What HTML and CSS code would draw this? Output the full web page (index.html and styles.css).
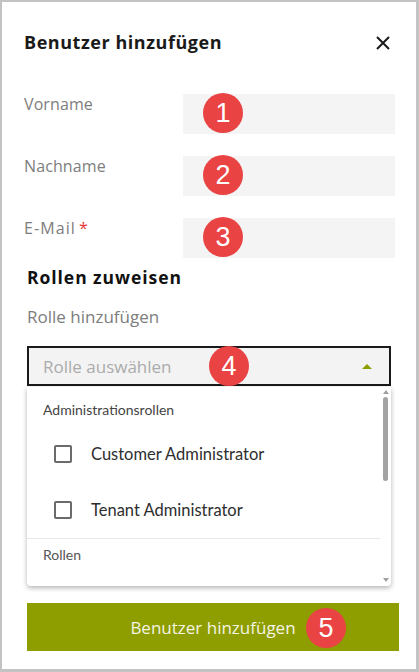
FILE: index.html
```html
<!DOCTYPE html>
<html lang="de">
<head>
<meta charset="utf-8">
<title>Benutzer hinzufügen</title>
<link rel="stylesheet" href="styles.css">
</head>
<body>
<div class="dialog">
  <div class="header">
    <h1 class="title">Benutzer hinzufügen</h1>
    <svg class="close" width="14" height="14" viewBox="0 0 14 14"><path d="M1 1L13 13M13 1L1 13" stroke="#1a1a1a" stroke-width="2" fill="none"/></svg>
  </div>

  <div class="fields">
    <label class="label">Vorname</label>
    <div class="input"><span class="badge badge-field">1</span></div>
    <label class="label">Nachname</label>
    <div class="input"><span class="badge badge-field">2</span></div>
    <label class="label label-email">E-Mail<span class="req">*</span></label>
    <div class="input"><span class="badge badge-field">3</span></div>
  </div>

  <div class="roles">
    <h2 class="roles-title">Rollen zuweisen</h2>
    <div class="roles-sub">Rolle hinzufügen</div>
    <div class="select">
      <span class="placeholder">Rolle auswählen</span>
      <span class="caret"></span>
      <span class="badge badge-select">4</span>
    </div>
    <div class="dropdown">
      <div class="group">Administrationsrollen</div>
      <div class="option"><span class="checkbox"></span><span>Customer Administrator</span></div>
      <div class="option"><span class="checkbox"></span><span>Tenant Administrator</span></div>
      <div class="divider"></div>
      <div class="group group-2">Rollen</div>
      <div class="scrollbar">
        <span class="sb-up"></span>
        <span class="sb-thumb"></span>
        <span class="sb-down"></span>
      </div>
    </div>
    <button class="submit">Benutzer hinzufügen<span class="badge badge-button">5</span></button>
  </div>
</div>
</body>
</html>
```

FILE: styles.css
```css
* { box-sizing: border-box; }
html, body { margin: 0; padding: 0; background: #fff; }
.dialog {
  width: 419px;
  height: 672px;
  border-style: solid;
  border-color: #c3c3c3;
  border-width: 2px 3px 3px 2px;
  font-family: "Open Sans", "Noto Sans", sans-serif;
  overflow: hidden;
}
.header {
  display: flex;
  justify-content: space-between;
  align-items: center;
  padding: 28px 26px 0 22px;
}
.title {
  margin: 0;
  font-size: 18px;
  line-height: 24px;
  font-weight: 700;
  letter-spacing: 0.55px;
  color: #1a1a1a;
}
.close { display: block; margin-top: 1px; }

.fields {
  display: grid;
  grid-template-columns: 159px 212px;
  row-gap: 22px;
  padding-left: 22px;
  margin-top: 40px;
}
.label {
  font-size: 16px;
  line-height: 20px;
  color: #7d7d7d;
  letter-spacing: 0.1px;
}
.label-email { letter-spacing: 1.1px; }
.req { color: #e53935; margin-left: 3px; }
.input {
  position: relative;
  height: 40px;
  background: #f4f4f4;
}
.badge {
  position: absolute;
  width: 40px;
  height: 40px;
  border-radius: 50%;
  background: #e94343;
  color: #fff;
  font-family: "Liberation Sans", Arial, sans-serif;
  font-size: 27px;
  line-height: 40px;
  text-align: center;
  letter-spacing: 0;
}
.badge-field { left: 20px; top: -1px; }

.roles { padding-left: 25px; }
.roles-title {
  margin: 8px 0 0;
  font-size: 17.5px;
  line-height: 22px;
  font-weight: 700;
  letter-spacing: 0.95px;
  color: #111;
}
.roles-sub {
  margin-top: 18px;
  font-size: 17px;
  line-height: 22px;
  color: #7d7d7d;
}
.select {
  position: relative;
  margin-top: 18px;
  width: 364px;
  height: 40px;
  border: 2px solid #1a1a1a;
  background: #f3f3f3;
  display: flex;
  align-items: center;
  justify-content: space-between;
  padding: 0 17px 0 14px;
}
.placeholder { font-size: 17px; color: #ababab; }
.caret {
  width: 0; height: 0;
  border-left: 5px solid transparent;
  border-right: 5px solid transparent;
  border-bottom: 5px solid #8e9d00;
}
.badge-select { left: 180px; top: -2px; }

.dropdown {
  position: relative;
  margin-top: 1px;
  width: 364px;
  height: 199px;
  background: #fff;
  border-radius: 0 0 4px 4px;
  box-shadow: 0 2px 5px rgba(0,0,0,0.3);
  font-family: "Lato", "Noto Sans", sans-serif;
  overflow: hidden;
}
.group {
  height: 39px;
  padding: 14px 0 0 16px;
  font-size: 14px;
  line-height: 18px;
  color: #444;
}
.group-2 { height: 39px; padding-top: 7px; color: #555; }
.option {
  height: 56px;
  display: flex;
  align-items: center;
  gap: 19px;
  padding-left: 27px;
  font-size: 16.5px;
  color: #2e2e2e;
}
.checkbox {
  width: 18px;
  height: 18px;
  border: 2px solid #6a6a6a;
  border-radius: 2px;
  flex: none;
}
.divider {
  height: 1px;
  margin-right: 11px;
  background: #e8e8e8;
}
.scrollbar {
  position: absolute;
  top: 0;
  right: 0;
  width: 11px;
  height: 100%;
  display: flex;
  flex-direction: column;
  align-items: center;
  padding: 3px 0 4px;
}
.sb-up, .sb-down {
  width: 0; height: 0;
  border-left: 3px solid transparent;
  border-right: 3px solid transparent;
}
.sb-up { border-bottom: 4px solid #a0a0a0; }
.sb-down { border-top: 4px solid #a0a0a0; margin-top: auto; }
.sb-thumb {
  margin-top: 3px;
  width: 5px;
  height: 84px;
  border-radius: 3px;
  background: #a3a3a3;
}

.submit {
  position: relative;
  display: block;
  margin-top: 17px;
  width: 372px;
  height: 48px;
  border: 0;
  padding: 0;
  background: #8e9d00;
  color: #f4f4e4;
  font-family: "Open Sans", "Noto Sans", sans-serif;
  font-size: 17px;
}
.badge-button { left: 279px; top: 5px; }
```
